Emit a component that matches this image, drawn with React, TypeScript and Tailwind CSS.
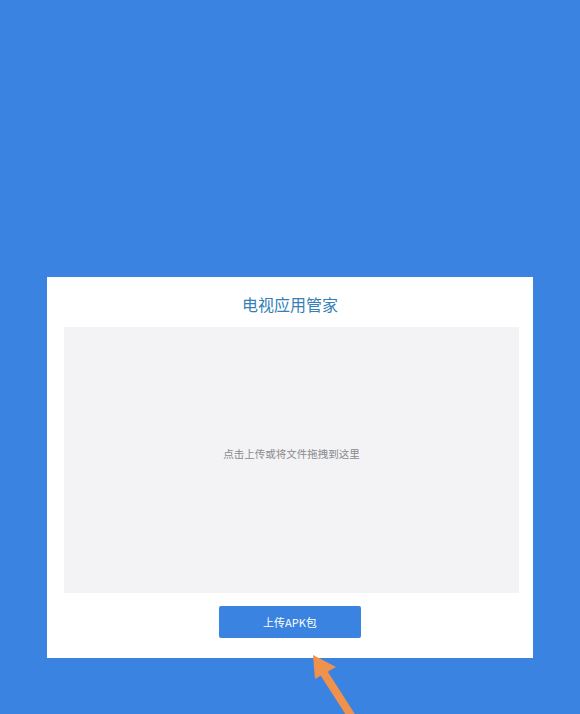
export default function App() {
  return (
    <div
      className="relative h-[714px] w-[580px] overflow-hidden bg-[#3a83e0] pl-[47px] pt-[277px]"
      style={{ fontFamily: '"Noto Sans CJK SC", "Noto Sans", sans-serif' }}
    >
      {/* 卡片 */}
      <div className="flex w-[486px] flex-col items-center bg-white pb-[20px] pt-[15px]">
        <h1 className="text-[16px] leading-[24px] text-[#3580b5]">电视应用管家</h1>

        <div className="ml-[3px] mt-[11px] flex h-[266px] w-[455px] items-center justify-center bg-[#f3f2f4] pb-[12px]">
          <span className="text-[10.5px] text-[#8a8a8c]">点击上传或将文件拖拽到这里</span>
        </div>

        <button
          type="button"
          className="mt-[13px] flex h-[32px] w-[142px] items-center justify-center rounded-[2px] bg-[#3a83e0] text-[11px] text-white"
        >
          上传APK包
        </button>
      </div>

      {/* 橙色箭头 */}
      <svg
        className="absolute left-[300px] top-[645px]"
        width="70"
        height="70"
        viewBox="0 0 70 70"
      >
        <line x1="20" y1="22" x2="52" y2="72" stroke="#f0924c" strokeWidth="8" />
        <polygon points="13,10 15,34 36,22" fill="#f0924c" />
      </svg>
    </div>
  );
}
